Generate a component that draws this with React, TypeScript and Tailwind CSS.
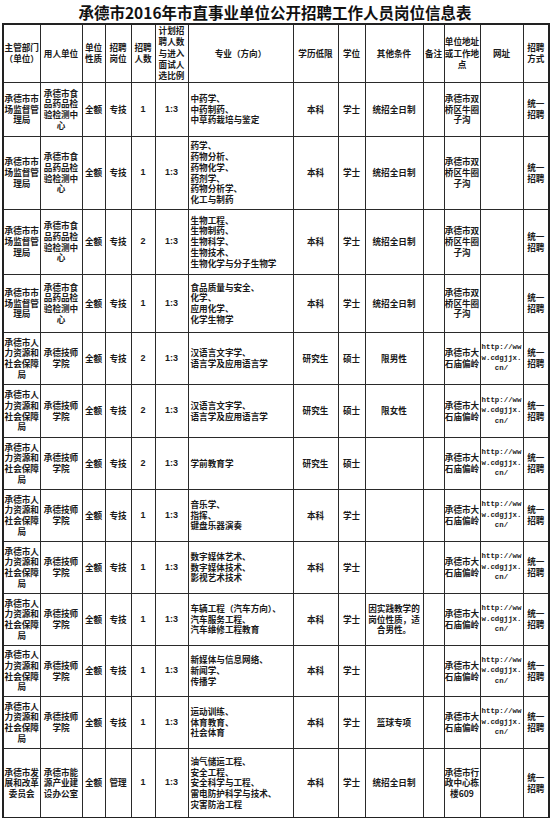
const URL_TEXT = "http://ww\nw.cdgjjx.\ncn/";

const SCJ = "承德市市\n场监督管\n理局";
const SPJ = "承德市食\n品药品检\n验检测中\n心";
const SQ = "承德市双\n桥区牛圈\n子沟";
const RS = "承德市人\n力资源和\n社会保障\n局";
const JS = "承德技师\n学院";
const DS = "承德市大\n石庙偏岭";

type Row = {
  dept: string;
  unit: string;
  post: string;
  num: string;
  major: string;
  edu: string;
  deg: string;
  other: string;
  addr: string;
  url: string;
  h: string;
};

const rows: Row[] = [
  { dept: SCJ, unit: SPJ, post: "专技", num: "1", major: "中药学、\n中药制药、\n中草药栽培与鉴定", edu: "本科", deg: "学士", other: "统招全日制", addr: SQ, url: "", h: "h-[54px]" },
  { dept: SCJ, unit: SPJ, post: "专技", num: "1", major: "药学、\n药物分析、\n药物化学、\n药剂学、\n药物分析学、\n化工与制药", edu: "本科", deg: "学士", other: "统招全日制", addr: SQ, url: "", h: "h-[73px]" },
  { dept: SCJ, unit: SPJ, post: "专技", num: "2", major: "生物工程、\n生物制药、\n生物科学、\n生物技术、\n生物化学与分子生物学", edu: "本科", deg: "学士", other: "统招全日制", addr: SQ, url: "", h: "h-[65px]" },
  { dept: SCJ, unit: SPJ, post: "专技", num: "1", major: "食品质量与安全、\n化学、\n应用化学、\n化学生物学", edu: "本科", deg: "学士", other: "统招全日制", addr: SQ, url: "", h: "h-[58px]" },
  { dept: RS, unit: JS, post: "专技", num: "2", major: "汉语言文字学、\n语言学及应用语言学", edu: "研究生", deg: "硕士", other: "限男性", addr: DS, url: URL_TEXT, h: "h-[52px]" },
  { dept: RS, unit: JS, post: "专技", num: "2", major: "汉语言文字学、\n语言学及应用语言学", edu: "研究生", deg: "硕士", other: "限女性", addr: DS, url: URL_TEXT, h: "h-[53px]" },
  { dept: RS, unit: JS, post: "专技", num: "2", major: "学前教育学", edu: "研究生", deg: "硕士", other: "", addr: DS, url: URL_TEXT, h: "h-[52px]" },
  { dept: RS, unit: JS, post: "专技", num: "1", major: "音乐学、\n指挥、\n键盘乐器演奏", edu: "本科", deg: "学士", other: "", addr: DS, url: URL_TEXT, h: "h-[52px]" },
  { dept: RS, unit: JS, post: "专技", num: "1", major: "数字媒体艺术、\n数字媒体技术、\n影视艺术技术", edu: "本科", deg: "学士", other: "", addr: DS, url: URL_TEXT, h: "h-[52px]" },
  { dept: RS, unit: JS, post: "专技", num: "1", major: "车辆工程（汽车方向）、\n汽车服务工程、\n汽车维修工程教育", edu: "本科", deg: "学士", other: "因实践教学的\n岗位性质，适\n合男性。", addr: DS, url: URL_TEXT, h: "h-[52px]" },
  { dept: RS, unit: JS, post: "专技", num: "1", major: "新媒体与信息网络、\n新闻学、\n传播学", edu: "本科", deg: "学士", other: "", addr: DS, url: URL_TEXT, h: "h-[51px]" },
  { dept: RS, unit: JS, post: "专技", num: "1", major: "运动训练、\n体育教育、\n社会体育", edu: "本科", deg: "学士", other: "篮球专项", addr: DS, url: URL_TEXT, h: "h-[52px]" },
  { dept: "承德市发\n展和改革\n委员会", unit: "承德市能\n源产业建\n设办公室", post: "管理", num: "1", major: "油气储运工程、\n安全工程、\n安全科学与工程、\n雷电防护科学与技术、\n灾害防治工程", edu: "本科", deg: "学士", other: "统招全日制", addr: "承德市行\n政中心栋\n楼609", url: "", h: "h-[70px]" },
];

const headers = [
  "主管部门\n（单位）",
  "用人单位",
  "单位\n性质",
  "招聘\n岗位",
  "招聘\n人数",
  "计划招\n聘人数\n与进入\n面试人\n选比例",
  "专业（方向）",
  "学历低限",
  "学位",
  "其他条件",
  "备注",
  "单位地址\n或工作地\n点",
  "网址",
  "招聘\n方式",
];

const cell = "border border-[#2a2a2a] p-0 align-middle text-center whitespace-pre";

export default function App() {
  return (
    <div className="w-[550px] h-[818px] bg-white text-[#1a1a1a] font-['Noto_Sans_CJK_SC',sans-serif] overflow-hidden">
      <h1 className="h-[23px] pt-[1px] text-center text-[15.5px] font-bold leading-[22px] text-[#111]">
        承德市2016年市直事业单位公开招聘工作人员岗位信息表
      </h1>
      <div className="px-[2px]">
        <table className="w-[546px] table-fixed border-collapse border-2 border-[#222] text-[8.6px] leading-[10.7px] font-semibold">
          <colgroup>
            <col className="w-[37px]" />
            <col className="w-[42px]" />
            <col className="w-[23px]" />
            <col className="w-[26px]" />
            <col className="w-[24px]" />
            <col className="w-[33px]" />
            <col className="w-[105px]" />
            <col className="w-[45px]" />
            <col className="w-[27px]" />
            <col className="w-[58px]" />
            <col className="w-[21px]" />
            <col className="w-[36px]" />
            <col className="w-[43px]" />
            <col className="w-[26px]" />
          </colgroup>
          <thead>
            <tr className="h-[58px]">
              {headers.map((h, i) => (
                <th key={i} className={`${cell} font-semibold leading-[11.2px]`}>
                  {h}
                </th>
              ))}
            </tr>
          </thead>
          <tbody>
            {rows.map((r, i) => (
              <tr key={i} className={r.h}>
                <td className={cell}>{r.dept}</td>
                <td className={cell}>{r.unit}</td>
                <td className={cell}>全额</td>
                <td className={cell}>{r.post}</td>
                <td className={`${cell} font-['Liberation_Sans',sans-serif] text-[9px]`}>{r.num}</td>
                <td className={`${cell} font-['Liberation_Sans',sans-serif] text-[9px]`}>1:3</td>
                <td className={`${cell} text-left pl-[2px]`}>{r.major}</td>
                <td className={cell}>{r.edu}</td>
                <td className={cell}>{r.deg}</td>
                <td className={cell}>{r.other}</td>
                <td className={cell}></td>
                <td className={cell}>{r.addr}</td>
                <td className={`${cell} font-['Liberation_Mono',monospace] text-[7.4px] leading-[10.5px] font-bold`}>
                  {r.url}
                </td>
                <td className={cell}>统一{"\n"}招聘</td>
              </tr>
            ))}
          </tbody>
        </table>
      </div>
    </div>
  );
}
